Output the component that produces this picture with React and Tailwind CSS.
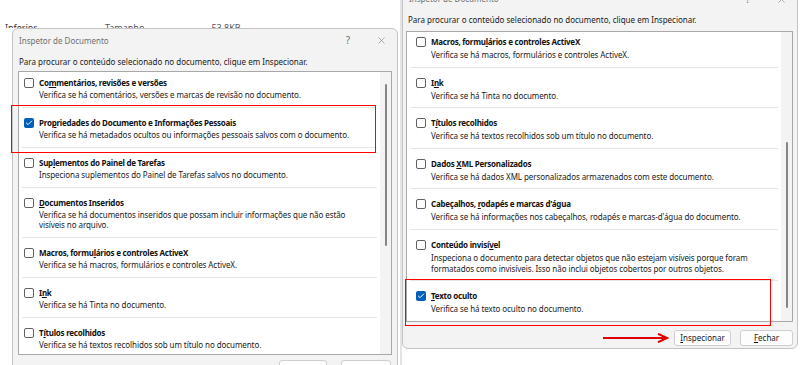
import { Check, X } from "lucide-react";

const leftItems = [
  { title: ["Co", "m", "mentários, revisões e versões"], desc: ["Verifica se há comentários, versões e marcas de revisão no documento."] },
  { title: ["Pro", "p", "riedades do Documento e Informações Pessoais"], desc: ["Verifica se há metadados ocultos ou informações pessoais salvos com o documento."], checked: true },
  { title: ["Sup", "l", "ementos do Painel de Tarefas"], desc: ["Inspeciona suplementos do Painel de Tarefas salvos no documento."] },
  { title: ["", "D", "ocumentos Inseridos"], desc: ["Verifica se há documentos inseridos que possam incluir informações que não estão", "visíveis no arquivo."] },
  { title: ["Macros, formu", "l", "ários e controles ActiveX"], desc: ["Verifica se há macros, formulários e controles ActiveX."] },
  { title: ["I", "n", "k"], desc: ["Verifica se há Tinta no documento."] },
  { title: ["T", "í", "tulos recolhidos"], desc: ["Verifica se há textos recolhidos sob um título no documento."] },
];

const rightItems = [
  leftItems[4],
  leftItems[5],
  leftItems[6],
  { title: ["Dados ", "X", "ML Personalizados"], desc: ["Verifica se há dados XML personalizados armazenados com este documento."] },
  { title: ["Cabeçalhos, ", "r", "odapés e marcas d'água"], desc: ["Verifica se há informações nos cabeçalhos, rodapés e marcas-d'água do documento."] },
  { title: ["Conteúdo invisí", "v", "el"], desc: ["Inspeciona o documento para detectar objetos que não estejam visíveis porque foram", "formatados como invisíveis. Isso não inclui objetos cobertos por outros objetos."] },
  { title: ["", "T", "exto oculto"], desc: ["Verifica se há texto oculto no documento."], checked: true },
];

function Box({ checked }) {
  if (checked) {
    return (
      <span className="w-[10px] h-[10px] rounded-[2px] bg-[#005fb8] flex items-center justify-center shrink-0">
        <Check className="w-[8px] h-[8px] text-white" strokeWidth={3} />
      </span>
    );
  }
  return <span className="w-[10px] h-[10px] rounded-[2px] border border-[#616161] bg-white shrink-0" />;
}

function Item({ item, pad, lead }) {
  return (
    <div className={`border-b border-[#e6e6e6] pt-[8px] ${pad}`}>
      <div className="flex items-center gap-[5px] h-[14px]">
        <Box checked={item.checked} />
        <span className="font-bold text-[8px] tracking-[-0.25px] text-[#111] whitespace-nowrap">
          {item.title[0]}
          <span className="underline">{item.title[1]}</span>
          {item.title[2]}
        </span>
      </div>
      {item.desc.map((d) => (
        <div key={d} className={`pl-[15px] text-[8px] tracking-[-0.08px] ${lead} text-[#1a1a1a] whitespace-nowrap`}>
          {d}
        </div>
      ))}
    </div>
  );
}

function Scroll({ top, height }) {
  return (
    <div className="w-[11px] bg-[#f3f3f3] shrink-0 flex justify-center">
      <div className="w-[2px] rounded-full bg-[#858585]" style={{ marginTop: top, height }} />
    </div>
  );
}

function TitleBar({ h }) {
  return (
    <div className={`${h} flex items-center pl-[6px] pr-[10px] text-[#707070]`}>
      <span className="flex-1 text-[8px]">Inspetor de Documento</span>
      <span className="mr-[26px] text-[10px]">?</span>
      <X className="w-[11px] h-[11px] text-[#6e6e6e]" strokeWidth={1.2} />
    </div>
  );
}

export default function App() {
  return (
    <div className="w-[800px] h-[365px] bg-white flex overflow-hidden relative font-['Segoe_UI','Noto_Sans',sans-serif]">
      {/* left shot */}
      <div className="w-[400px] h-full relative">
        <div className="absolute top-[19px] left-0 h-[9px] overflow-hidden flex text-[9px] leading-[17px] text-[#333]">
          <span className="ml-[5px]">Inferior</span>
          <span className="ml-[68px] text-[#555]">Tamanho</span>
          <span className="ml-[67px] text-[#555]">53,8KB</span>
        </div>
        <div className="absolute left-[12px] top-[28px] w-[386px] h-[345px] rounded-t-[6px] border border-[#c4c4c4] bg-[#f3f3f3]">
          <TitleBar h="h-[23px]" />
          <div className="h-[19px] flex items-center pl-[6px] text-[8px] text-[#1a1a1a]">
            Para procurar o conteúdo selecionado no documento, clique em Inspecionar.
          </div>
          <div className="mx-[5px] h-[284px] border border-[#a8a8a8] bg-white flex overflow-hidden">
            <div className="flex-1 px-[3px] -mt-[4px]">
              {leftItems.map((it) => (
                <Item key={it.title.join("")} item={it} pad="pl-[2px] pb-[7px]" lead="leading-[10px]" />
              ))}
            </div>
            <Scroll top={12} height={162} />
          </div>
          <div className="flex justify-end gap-[14px] pr-[6px] mt-[5px]">
            <div className="w-[48px] h-[16px] rounded-[3px] border border-[#cfcfcf] bg-[#fdfdfd]" />
            <div className="w-[50px] h-[16px] rounded-[3px] border border-[#cfcfcf] bg-[#fdfdfd]" />
          </div>
        </div>
        <div className="absolute left-[11px] top-[105px] w-[365px] h-[48px] border-[1.5px] border-[#ff0000]" />
      </div>

      {/* right shot */}
      <div className="w-[400px] h-full flex relative">
        <div className="w-[2px] h-full bg-[#e4e4e4]" />
        <div className="w-[396px] h-[361px] -mt-[12px] border border-[#c4c4c4] rounded-[6px] bg-[#f3f3f3] flex flex-col">
          <TitleBar h="h-[20px]" />
          <div className="h-[22px] flex items-center pl-[5px] text-[8px] text-[#1a1a1a]">
            Para procurar o conteúdo selecionado no documento, clique em Inspecionar.
          </div>
          <div className="ml-[3px] mr-[4px] h-[291px] border border-[#a8a8a8] bg-white flex overflow-hidden">
            <div className="flex-1 px-[3px] -mt-[5px]">
              {rightItems.map((it) => (
                <Item key={it.title.join("")} item={it} pad="pl-[6px] pb-[6.5px]" lead="leading-[11px]" />
              ))}
            </div>
            <Scroll top={110} height={166} />
          </div>
          <div className="flex justify-end items-center gap-[9px] pr-[4px] mt-[8px]">
            <svg width="66" height="10" viewBox="0 0 66 10" className="mr-[-4px]">
              <line x1="0" y1="5" x2="63" y2="5" stroke="#e00000" strokeWidth="2" />
              <path d="M55 0.8 L64 5 L55 9.2" fill="none" stroke="#e00000" strokeWidth="2" />
            </svg>
            <div className="w-[57px] h-[16px] rounded-[3px] border border-[#cfcfcf] bg-[#fdfdfd] flex items-center justify-center text-[8px] text-[#1a1a1a]">
              <span><span className="underline">I</span>nspecionar</span>
            </div>
            <div className="w-[53px] h-[16px] rounded-[3px] border border-[#cfcfcf] bg-[#fdfdfd] flex items-center justify-center text-[8px] text-[#1a1a1a]">
              <span><span className="underline">F</span>echar</span>
            </div>
          </div>
        </div>
        <div className="absolute left-[5px] top-[279px] w-[366px] h-[47px] border-[1.5px] border-[#ff0000]" />
      </div>
    </div>
  );
}
